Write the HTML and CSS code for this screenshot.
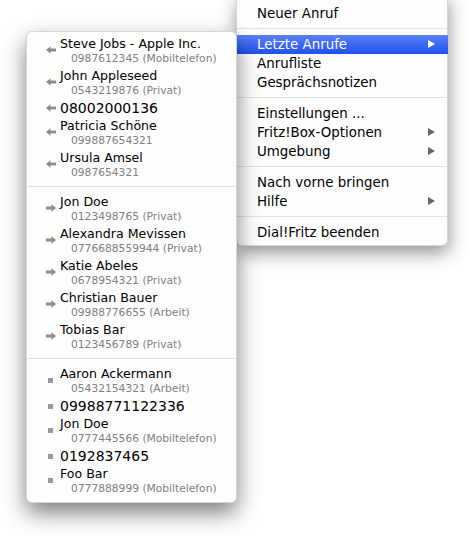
FILE: index.html
```html
<!DOCTYPE html>
<html lang="de">
<head>
<meta charset="utf-8">
<title>Dial!Fritz</title>
<link rel="stylesheet" href="styles.css">
</head>
<body>
<div class="desktop">
  <div class="menu main">
    <div class="item">Neuer Anruf</div>
    <div class="sep"></div>
    <div class="item active">Letzte Anrufe<span class="tri"></span></div>
    <div class="item">Anrufliste</div>
    <div class="item">Gesprächsnotizen</div>
    <div class="sep"></div>
    <div class="item">Einstellungen ...</div>
    <div class="item">Fritz!Box-Optionen<span class="tri"></span></div>
    <div class="item">Umgebung<span class="tri"></span></div>
    <div class="sep"></div>
    <div class="item">Nach vorne bringen</div>
    <div class="item">Hilfe<span class="tri"></span></div>
    <div class="sep"></div>
    <div class="item">Dial!Fritz beenden</div>
  </div>

  <div class="menu sub">
    <div class="entry"><div class="mark"><svg class="ico" viewBox="0 0 10 8"><polygon points="0,4 4.5,0.3 4.5,2.6 10,2.6 10,5.4 4.5,5.4 4.5,7.7"/></svg></div><div class="txt"><div class="name">Steve Jobs - Apple Inc.</div><div class="num">0987612345 (Mobiltelefon)</div></div></div>
    <div class="entry"><div class="mark"><svg class="ico" viewBox="0 0 10 8"><polygon points="0,4 4.5,0.3 4.5,2.6 10,2.6 10,5.4 4.5,5.4 4.5,7.7"/></svg></div><div class="txt"><div class="name">John Appleseed</div><div class="num">0543219876 (Privat)</div></div></div>
    <div class="entry single"><div class="mark"><svg class="ico" viewBox="0 0 10 8"><polygon points="0,4 4.5,0.3 4.5,2.6 10,2.6 10,5.4 4.5,5.4 4.5,7.7"/></svg></div><div class="txt"><div class="bignum">08002000136</div></div></div>
    <div class="entry"><div class="mark"><svg class="ico" viewBox="0 0 10 8"><polygon points="0,4 4.5,0.3 4.5,2.6 10,2.6 10,5.4 4.5,5.4 4.5,7.7"/></svg></div><div class="txt"><div class="name">Patricia Schöne</div><div class="num">099887654321</div></div></div>
    <div class="entry"><div class="mark"><svg class="ico" viewBox="0 0 10 8"><polygon points="0,4 4.5,0.3 4.5,2.6 10,2.6 10,5.4 4.5,5.4 4.5,7.7"/></svg></div><div class="txt"><div class="name">Ursula Amsel</div><div class="num">0987654321</div></div></div>
    <div class="sep"></div>
    <div class="entry"><div class="mark"><svg class="ico" viewBox="0 0 10 8"><polygon points="10,4 5.5,0.3 5.5,2.6 0,2.6 0,5.4 5.5,5.4 5.5,7.7"/></svg></div><div class="txt"><div class="name">Jon Doe</div><div class="num">0123498765 (Privat)</div></div></div>
    <div class="entry"><div class="mark"><svg class="ico" viewBox="0 0 10 8"><polygon points="10,4 5.5,0.3 5.5,2.6 0,2.6 0,5.4 5.5,5.4 5.5,7.7"/></svg></div><div class="txt"><div class="name">Alexandra Mevissen</div><div class="num">0776688559944 (Privat)</div></div></div>
    <div class="entry"><div class="mark"><svg class="ico" viewBox="0 0 10 8"><polygon points="10,4 5.5,0.3 5.5,2.6 0,2.6 0,5.4 5.5,5.4 5.5,7.7"/></svg></div><div class="txt"><div class="name">Katie Abeles</div><div class="num">0678954321 (Privat)</div></div></div>
    <div class="entry"><div class="mark"><svg class="ico" viewBox="0 0 10 8"><polygon points="10,4 5.5,0.3 5.5,2.6 0,2.6 0,5.4 5.5,5.4 5.5,7.7"/></svg></div><div class="txt"><div class="name">Christian Bauer</div><div class="num">09988776655 (Arbeit)</div></div></div>
    <div class="entry"><div class="mark"><svg class="ico" viewBox="0 0 10 8"><polygon points="10,4 5.5,0.3 5.5,2.6 0,2.6 0,5.4 5.5,5.4 5.5,7.7"/></svg></div><div class="txt"><div class="name">Tobias Bar</div><div class="num">0123456789 (Privat)</div></div></div>
    <div class="sep"></div>
    <div class="entry"><div class="mark"><span class="sq"></span></div><div class="txt"><div class="name">Aaron Ackermann</div><div class="num">05432154321 (Arbeit)</div></div></div>
    <div class="entry single"><div class="mark"><span class="sq"></span></div><div class="txt"><div class="bignum">09988771122336</div></div></div>
    <div class="entry"><div class="mark"><span class="sq"></span></div><div class="txt"><div class="name">Jon Doe</div><div class="num">0777445566 (Mobiltelefon)</div></div></div>
    <div class="entry single"><div class="mark"><span class="sq"></span></div><div class="txt"><div class="bignum">0192837465</div></div></div>
    <div class="entry"><div class="mark"><span class="sq"></span></div><div class="txt"><div class="name">Foo Bar</div><div class="num">0777888999 (Mobiltelefon)</div></div></div>
  </div>
</div>
</body>
</html>
```

FILE: styles.css
```css
* { box-sizing: border-box; }
html, body { margin: 0; padding: 0; background: #ffffff; }
body { font-family: "DejaVu Sans", "Lucida Grande", sans-serif; }

.desktop {
  position: relative;
  width: 470px;
  height: 537px;
  overflow: hidden;
  background: #ffffff;
}

.menu {
  position: absolute;
  background: #fefefe;
  border: 1px solid #d6d6d6;
}

.main {
  left: 236px;
  top: -6px;
  width: 212px;
  padding: 9px 0 3px;
  border-radius: 0 0 6px 6px;
  box-shadow: 1px 7px 18px rgba(0, 0, 0, 0.42);
  z-index: 1;
}

.item {
  position: relative;
  height: 19px;
  line-height: 19px;
  padding-left: 20px;
  font-size: 13.4px;
  color: #000;
  white-space: nowrap;
}

.item.active {
  background: linear-gradient(#5a80f5, #1f50ee);
  color: #fff;
  margin: 0 -1px;
  padding-left: 21px;
}

.tri {
  position: absolute;
  right: 12px;
  top: 5px;
  width: 0;
  height: 0;
  border-top: 4.5px solid transparent;
  border-bottom: 4.5px solid transparent;
  border-left: 7px solid #666666;
}
.item.active .tri { border-left-color: #fff; right: 13px; }

.sep {
  height: 12px;
  position: relative;
}
.sep::after {
  content: "";
  position: absolute;
  left: 0;
  right: 0;
  top: 5px;
  height: 1px;
  background: #e2e2e2;
}

.sub {
  left: 26px;
  top: 31px;
  width: 211px;
  padding: 3px 0 5px;
  border-radius: 6px;
  box-shadow: 0 10px 22px rgba(0, 0, 0, 0.5);
  z-index: 2;
}

.entry {
  display: grid;
  grid-template-columns: 14px 1fr;
  align-items: start;
  height: 32px;
  padding: 1px 0 0 19px;
}
.entry.single { height: 18px; padding-top: 0; align-items: center; }

.mark {
  height: 28px;
  display: flex;
  align-items: center;
  justify-content: flex-start;
}
.entry.single .mark { height: 18px; }

.ico {
  display: block;
  width: 10px;
  height: 8px;
  fill: #8d8d8d;
}

.sq {
  display: block;
  width: 5px;
  height: 5px;
  margin-left: 2px;
  background: #9a9a9a;
}

.txt { min-width: 0; }

.name {
  font-size: 12.6px;
  line-height: 16px;
  color: #000;
  white-space: nowrap;
}
.num {
  font-size: 10.7px;
  line-height: 14px;
  color: #808080;
  padding-left: 11px;
  white-space: nowrap;
}
.bignum {
  font-size: 14px;
  line-height: 18px;
  color: #000;
  white-space: nowrap;
}
```
